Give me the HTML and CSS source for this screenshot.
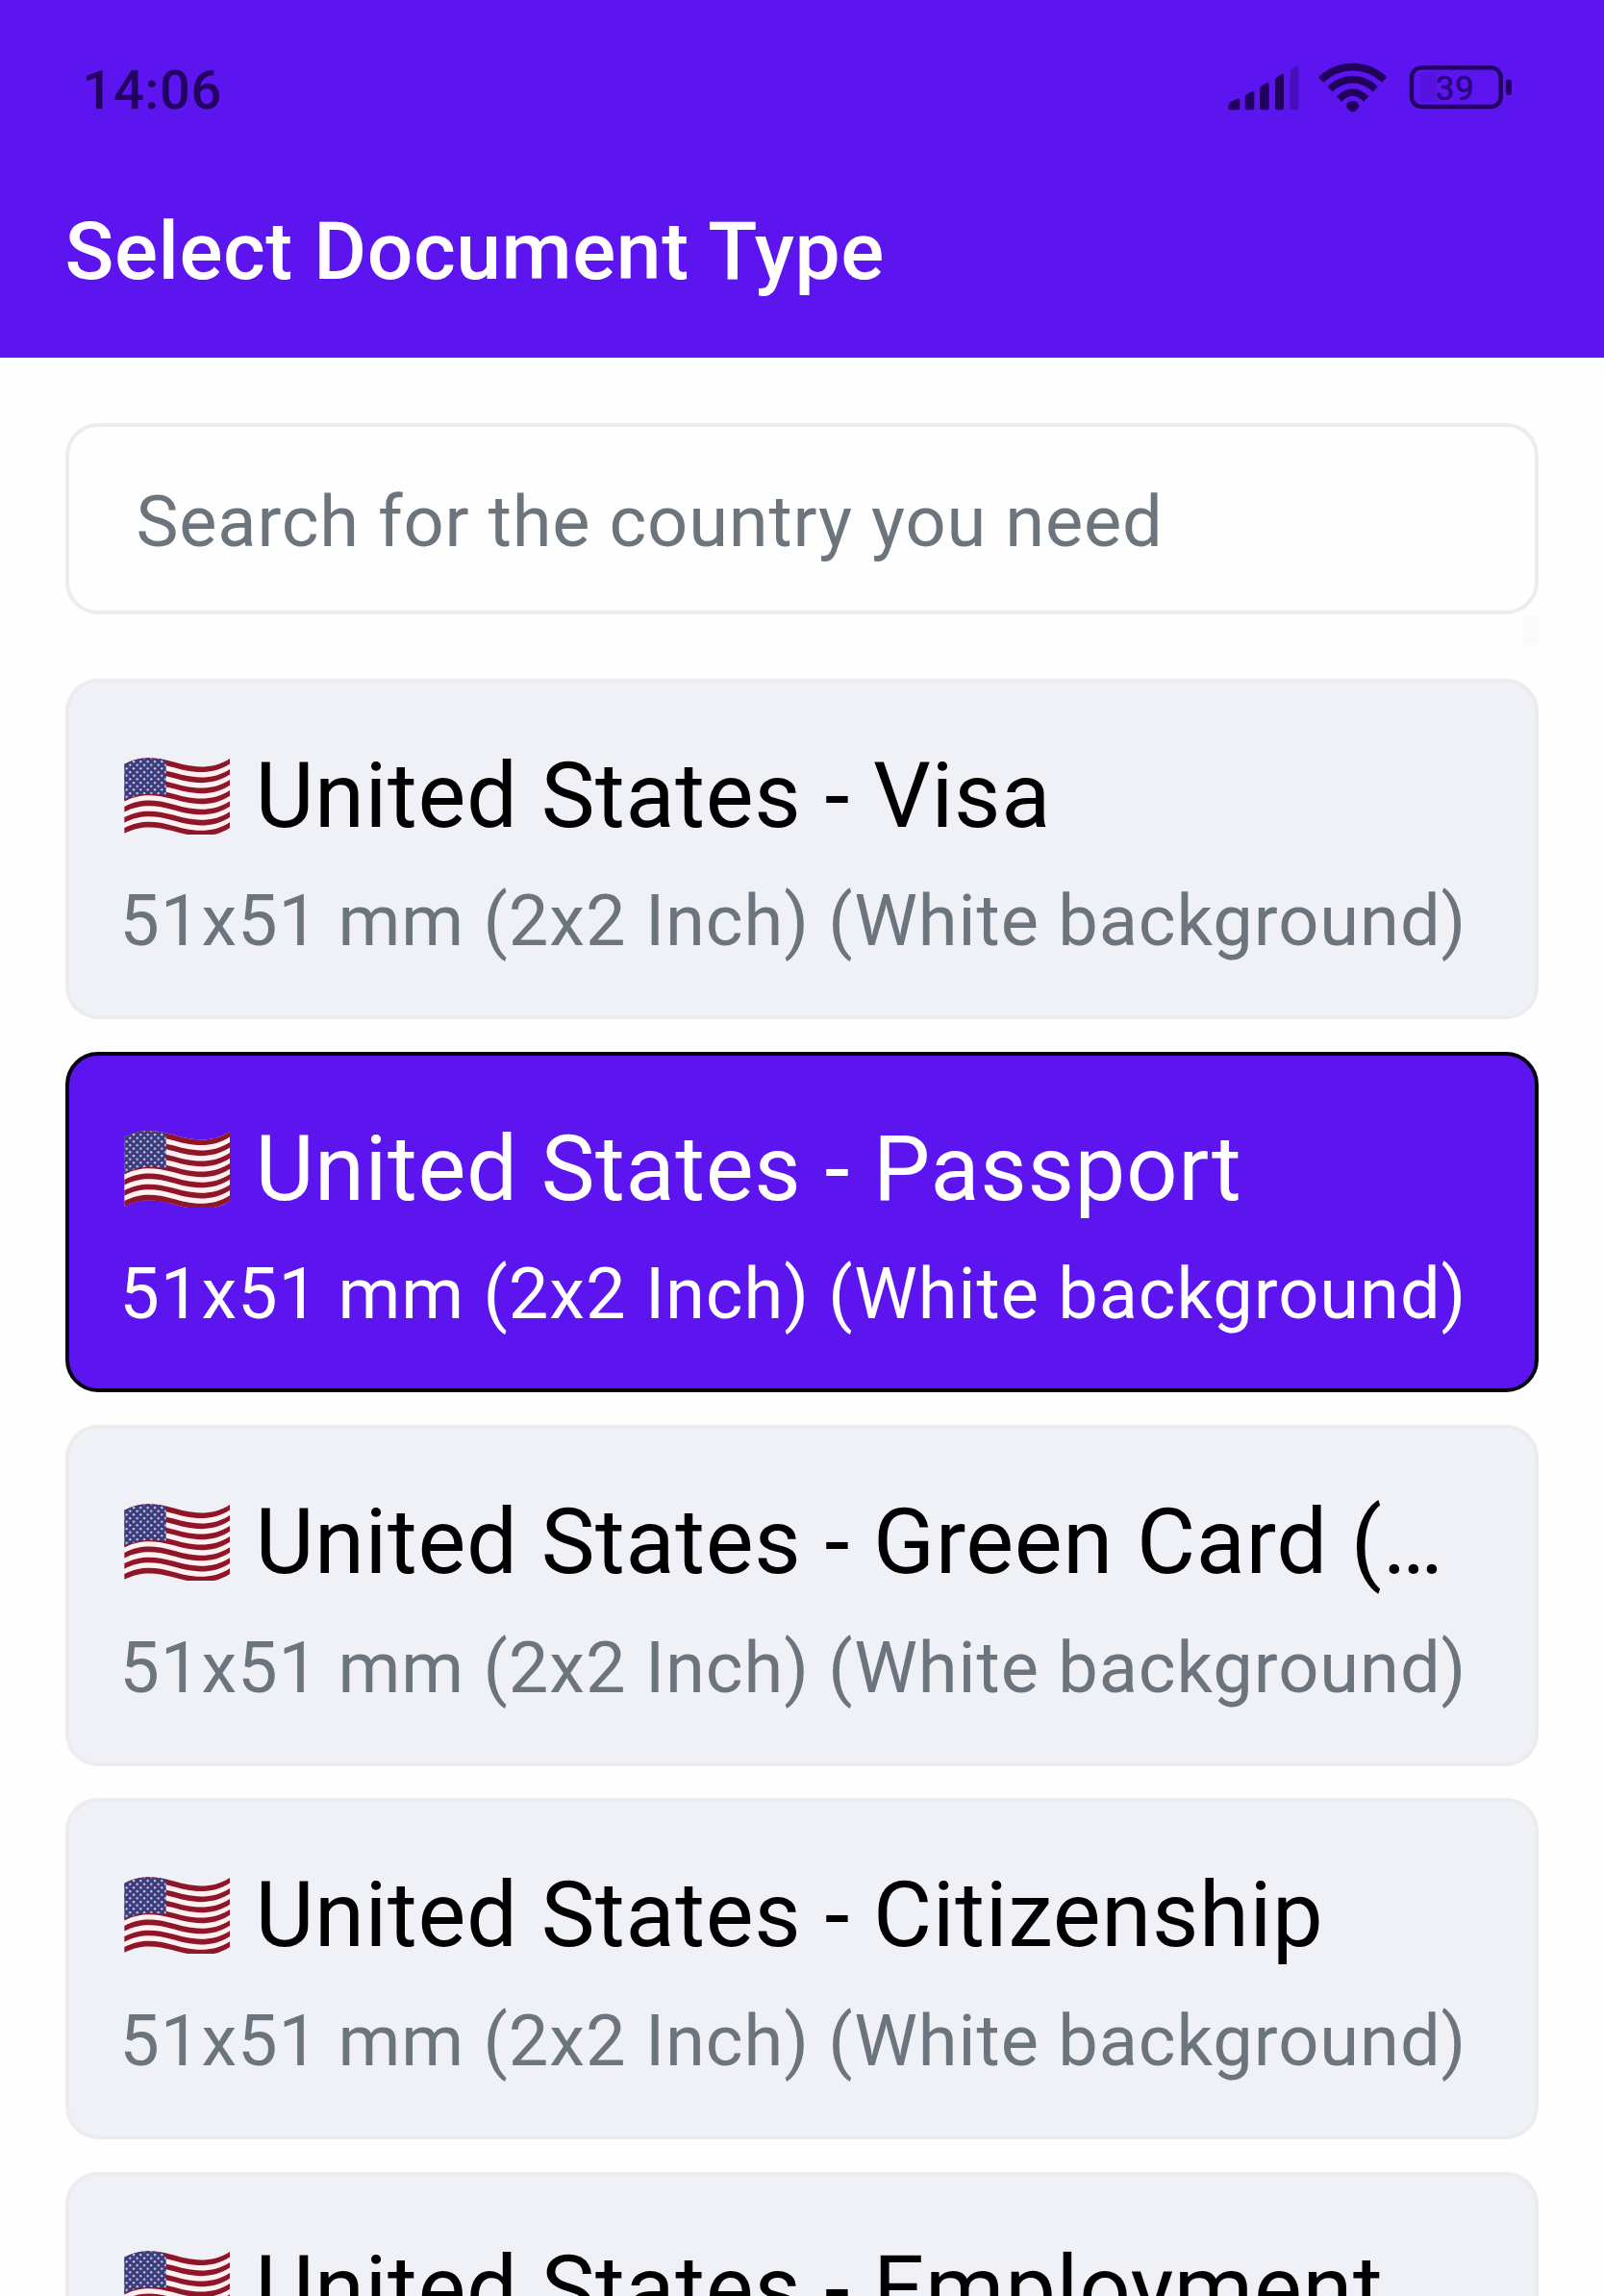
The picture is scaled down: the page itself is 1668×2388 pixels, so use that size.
FILE: index.html
```html
<!DOCTYPE html>
<html lang="en">
<head>
<meta charset="utf-8">
<title>Select Document Type</title>
<link rel="stylesheet" href="styles.css">
</head>
<body>
<svg class="defs" aria-hidden="true">
  <defs>
    <path id="stripe" d="M57 74c53 -28 103 -20 148 -8c45 12 115 34 182 -10v17c-67 44 -137 22 -182 10c-45 -12 -95 -20 -148 8z"/>
    <path id="field" d="M57 74c53 -28 103 -20 148 -8c45 12 115 34 182 -10v216c-67 44 -137 22 -182 10c-45 -12 -95 -20 -148 8z"/>
    <pattern id="stars" width="22" height="22" patternUnits="userSpaceOnUse" x="58" y="60">
      <circle cx="6" cy="6" r="3.4" fill="#d9dcf3"/>
      <circle cx="17" cy="17" r="3.4" fill="#d9dcf3"/>
    </pattern>
    <symbol id="flag-us" viewBox="56 54 332 240">
      <use href="#field" fill="#fff1f2"/>
      <g fill="#8f1528">
        <use href="#stripe"/>
        <use href="#stripe" y="33.2"/>
        <use href="#stripe" y="66.4"/>
        <use href="#stripe" y="99.6"/>
        <use href="#stripe" y="132.8"/>
        <use href="#stripe" y="166"/>
        <use href="#stripe" y="199.2"/>
      </g>
      <path d="M57 74c49 -26 94 -20 130 -12v110c-36 -6 -81 -10 -130 16z" fill="#3c3b7c"/>
      <path d="M57 74c49 -26 94 -20 130 -12v110c-36 -6 -81 -10 -130 16z" fill="url(#stars)"/>
    </symbol>
  </defs>
</svg>

<header class="header">
  <div class="status">
    <time class="clock">14:06</time>
    <svg class="status-icons" viewBox="0 0 1020 240">
      <g class="ink">
        <path d="M52 180q0 -8 8 -12l20 -10q8 -3 8 5v24q0 6 -6 6h-24q-6 0 -6 -6z"/>
        <path d="M104 153q0 -7 7 -10l15 -8q7 -3 7 5v47q0 6 -6 6h-17q-6 0 -6 -6z"/>
        <path d="M150 128q0 -7 7 -11l15 -8q7 -3 7 5v73q0 6 -6 6h-17q-6 0 -6 -6z"/>
        <path d="M198 101q0 -7 7 -11l13 -8q7 -3 7 5v100q0 6 -6 6h-15q-6 0 -6 -6z"/>
        <path class="dim" d="M245 75q0 -7 7 -11l12 -8q7 -3 7 5v126q0 6 -6 6h-14q-6 0 -6 -6z"/>
        <path d="M440 165c11 0 18 6 20 14c0 8 -12 20 -20 20s-20 -12 -20 -20c2 -8 9 -14 20 -14z"/>
      </g>
      <g class="arcs">
        <path d="M341 99Q384 59 440 59T539 99"/>
        <path d="M369 128Q402 98 440 98T511 128"/>
        <path d="M398 159Q419 138 440 138T482 159"/>
      </g>
      <rect class="charge" x="650" y="76" width="50" height="92" rx="10"/>
      <rect class="battery" x="624" y="61" width="278" height="122" rx="30"/>
      <rect class="ink" x="918" y="98" width="18" height="48" rx="8"/>
      <text class="percent" x="699" y="161">39</text>
    </svg>
  </div>
  <h1 class="title">Select Document Type</h1>
</header>

<main class="content">
  <div class="search">Search for the country you need</div>
  <ul class="list">
    <li class="card">
      <div class="name"><svg class="flag"><use href="#flag-us"/></svg><span>United States - Visa</span></div>
      <div class="size">51x51 mm (2x2 Inch) (White background)</div>
    </li>
    <li class="card selected">
      <div class="name"><svg class="flag"><use href="#flag-us"/></svg><span>United States - Passport</span></div>
      <div class="size">51x51 mm (2x2 Inch) (White background)</div>
    </li>
    <li class="card">
      <div class="name"><svg class="flag"><use href="#flag-us"/></svg><span>United States - Green Card (…</span></div>
      <div class="size">51x51 mm (2x2 Inch) (White background)</div>
    </li>
    <li class="card">
      <div class="name"><svg class="flag"><use href="#flag-us"/></svg><span>United States - Citizenship</span></div>
      <div class="size">51x51 mm (2x2 Inch) (White background)</div>
    </li>
    <li class="card">
      <div class="name"><svg class="flag"><use href="#flag-us"/></svg><span>United States - Employment</span></div>
    </li>
  </ul>
  <div class="scroll-hint"></div>
</main>
</body>
</html>
```
FILE: styles.css
```css
* { box-sizing: border-box; }

body {
  margin: 0;
  height: 2388px;
  overflow: hidden;
  display: flex;
  flex-direction: column;
  background: #fefefe;
  font-family: Roboto, sans-serif;
}

.defs { position: absolute; width: 0; height: 0; }

/* Header */
.header {
  flex: none;
  height: 372px;
  padding: 28px 68px 0 67.5px;
  background: #5d15ef;
}

.status {
  height: 132px;
  display: flex;
  align-items: center;
  justify-content: space-between;
  color: #22035f;
}

.clock {
  margin-left: 18px;
  font-size: 56px;
  font-weight: 500;
  letter-spacing: 0.7px;
}

.status-icons { width: 340px; height: 80px; margin-bottom: 8px; }
.ink { fill: #20025c; }
.dim { opacity: 0.35; }
.arcs { fill: none; stroke: #20025c; stroke-width: 23; }
.battery { fill: none; stroke: #22035f; stroke-width: 13; }
.charge { fill: #20025c; opacity: 0.1; }
.percent { fill: #2a0580; font-size: 104px; letter-spacing: 2px; stroke: #2a0580; stroke-width: 2; }

.title {
  margin: 0;
  color: #fff;
  font-size: 84px;
  font-weight: 500;
  line-height: 204px;
  letter-spacing: 0.55px;
  white-space: nowrap;
}

/* Content */
.content {
  position: relative;
  flex: none;
  padding: 68px 68px 0;
}

.search {
  height: 199px;
  display: flex;
  align-items: center;
  padding: 5px 69.5px 0;
  border: 4px solid #ececed;
  border-radius: 34px;
  color: #6c757d;
  font-size: 74px;
  letter-spacing: 0.83px;
  white-space: nowrap;
}

.list {
  margin: 66.6px 0 0;
  padding: 0;
  list-style: none;
  display: flex;
  flex-direction: column;
  gap: 33.8px;
}

.card {
  height: 354.5px;
  padding: 63px 0 0 52.3px;
  border: 4px solid #ebecef;
  border-radius: 34px;
  background: #f0f1f6;
  color: #000;
  white-space: nowrap;
}

.name {
  display: flex;
  align-items: center;
  gap: 26px;
  height: 110px;
  font-size: 94px;
  line-height: 110px;
  letter-spacing: 0.66px;
}

.flag { flex: none; width: 110.7px; height: 80px; margin-left: 4.4px; }

.size {
  margin-top: 30.4px;
  color: #6c757d;
  font-size: 74px;
  line-height: 90px;
  letter-spacing: 0.96px;
}

.selected { background: #5d15ef; border-color: #05010f; color: #fff; }
.selected .size { color: #fff; }

.scroll-hint {
  position: absolute;
  right: 68px;
  top: 268px;
  width: 16px;
  height: 31px;
  background: #fafafa;
}
```
